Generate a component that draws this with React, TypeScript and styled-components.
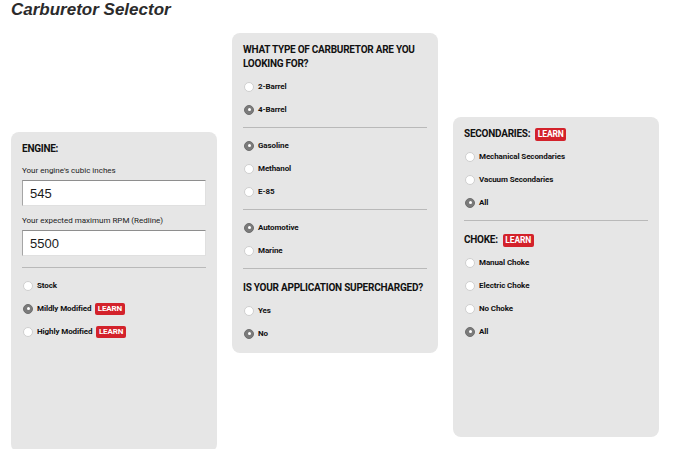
import * as React from 'react';
import styled, { createGlobalStyle } from 'styled-components';

type Opt = { label: string; checked?: boolean; learn?: boolean };

const GlobalStyle = createGlobalStyle`
  html, body {
    margin: 0;
    padding: 0;
    background: #ffffff;
  }
  body {
    font-family: Roboto, "Liberation Sans", Arial, sans-serif;
    color: #111111;
  }
`;

const Page = styled.div`
  width: 680px;
  height: 449px;
  overflow: hidden;
  padding: 0 11px;
  box-sizing: border-box;
`;

const Title = styled.h1`
  margin: 0;
  font-family: "Liberation Sans", Arial, sans-serif;
  font-size: 17px;
  line-height: 20px;
  font-weight: 700;
  font-style: italic;
  color: #2b2b2b;
`;

const Columns = styled.div`
  display: flex;
  align-items: flex-start;
  gap: 15px;
  margin-top: 13px;
`;

const Panel = styled.section<{ $offset: number }>`
  width: 206px;
  height: 320px;
  margin-top: ${({ $offset }) => $offset}px;
  box-sizing: border-box;
  padding: 10px 11px;
  background: #e6e6e6;
  border-radius: 8px;
  flex-shrink: 0;
`;

const Heading = styled.h2<{ $afterRule?: boolean }>`
  display: flex;
  align-items: center;
  flex-wrap: wrap;
  gap: 5px;
  margin: ${({ $afterRule }) => ($afterRule ? '12px' : '0')} 0 4px;
  font-size: 10px;
  line-height: 14px;
  font-weight: 700;
  letter-spacing: -0.25px;
  text-transform: uppercase;
  color: #111111;
`;

const Fields = styled.div`
  display: flex;
  flex-direction: column;
  gap: 9px;
  margin: 9px 0 11px;
`;

const FieldGroup = styled.div`
  display: flex;
  flex-direction: column;
  gap: 3px;
`;

const FieldLabel = styled.label`
  font-size: 8px;
  line-height: 12px;
  color: #222222;
`;

const TextField = styled.input`
  display: block;
  width: 100%;
  height: 26px;
  box-sizing: border-box;
  padding: 0 7px;
  border: 1px solid #e0e0e0;
  border-top-color: #8e8e8e;
  border-left-color: #a5a5a5;
  background: #ffffff;
  font-family: "Liberation Sans", Arial, sans-serif;
  font-size: 13px;
  color: #1a1a1a;
  outline: none;
`;

const Rule = styled.hr`
  margin: 6px 0;
  border: none;
  height: 1px;
  background: #b9b9b9;
`;

const OptionRow = styled.div`
  display: flex;
  align-items: center;
  height: 23px;
  gap: 4px;
  font-size: 8px;
  font-weight: 700;
  letter-spacing: -0.1px;
  color: #111111;
`;

const RadioDot = styled.span<{ $checked?: boolean }>`
  position: relative;
  width: 10px;
  height: 10px;
  box-sizing: border-box;
  border-radius: 50%;
  flex-shrink: 0;
  margin-left: 1px;
  background: ${({ $checked }) => ($checked ? '#7b7b7b' : '#ffffff')};
  border: 1px solid ${({ $checked }) => ($checked ? '#6e6e6e' : '#cfcfcf')};

  &::after {
    content: '';
    display: ${({ $checked }) => ($checked ? 'block' : 'none')};
    position: absolute;
    left: 50%;
    top: 50%;
    width: 3px;
    height: 3px;
    margin: -1.5px 0 0 -1.5px;
    border-radius: 50%;
    background: #ffffff;
  }
`;

const Learn = styled.span<{ $large?: boolean }>`
  display: inline-flex;
  align-items: center;
  height: ${({ $large }) => ($large ? 13 : 12)}px;
  padding: 0 2.5px;
  border-radius: 2px;
  background: #d3222b;
  color: #ffffff;
  font-size: ${({ $large }) => ($large ? 8.5 : 8)}px;
  font-weight: 700;
  letter-spacing: -0.15px;
`;

const OptionList: React.FC<{ options: Opt[] }> = ({ options }) => (
  <>
    {options.map((o) => (
      <OptionRow key={o.label}>
        <RadioDot $checked={o.checked} />
        <span>{o.label}</span>
        {o.learn && <Learn>LEARN</Learn>}
      </OptionRow>
    ))}
  </>
);

export default function App() {
  return (
    <Page>
      <GlobalStyle />
      <Title>Carburetor Selector</Title>
      <Columns>
        <Panel $offset={99}>
          <Heading>Engine:</Heading>
          <Fields>
            <FieldGroup>
              <FieldLabel>Your engine's cubic inches</FieldLabel>
              <TextField defaultValue="545" />
            </FieldGroup>
            <FieldGroup>
              <FieldLabel>Your expected maximum RPM (Redline)</FieldLabel>
              <TextField defaultValue="5500" />
            </FieldGroup>
          </Fields>
          <Rule />
          <OptionList
            options={[
              { label: 'Stock' },
              { label: 'Mildly Modified', checked: true, learn: true },
              { label: 'Highly Modified', learn: true },
            ]}
          />
        </Panel>

        <Panel $offset={0}>
          <Heading>What type of carburetor are you looking for?</Heading>
          <OptionList options={[{ label: '2-Barrel' }, { label: '4-Barrel', checked: true }]} />
          <Rule />
          <OptionList
            options={[{ label: 'Gasoline', checked: true }, { label: 'Methanol' }, { label: 'E-85' }]}
          />
          <Rule />
          <OptionList options={[{ label: 'Automotive', checked: true }, { label: 'Marine' }]} />
          <Rule />
          <Heading $afterRule>Is your application supercharged?</Heading>
          <OptionList options={[{ label: 'Yes' }, { label: 'No', checked: true }]} />
        </Panel>

        <Panel $offset={84}>
          <Heading>
            Secondaries: <Learn $large>LEARN</Learn>
          </Heading>
          <OptionList
            options={[
              { label: 'Mechanical Secondaries' },
              { label: 'Vacuum Secondaries' },
              { label: 'All', checked: true },
            ]}
          />
          <Rule />
          <Heading $afterRule>
            Choke: <Learn $large>LEARN</Learn>
          </Heading>
          <OptionList
            options={[
              { label: 'Manual Choke' },
              { label: 'Electric Choke' },
              { label: 'No Choke' },
              { label: 'All', checked: true },
            ]}
          />
        </Panel>
      </Columns>
    </Page>
  );
}
